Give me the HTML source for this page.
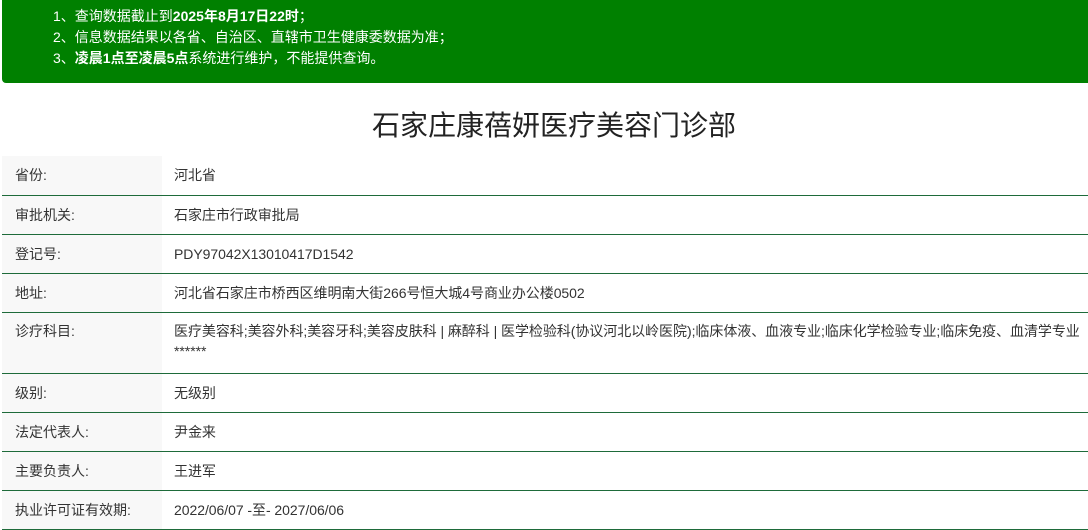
<!DOCTYPE html>
<html><head><meta charset="utf-8"><style>
*{margin:0;padding:0;box-sizing:border-box}
body{width:1088px;height:530px;overflow:hidden;background:#fff;font-family:"Liberation Sans","Noto Sans CJK SC",sans-serif;color:#333}
.ban{position:absolute;left:2px;top:0;width:1086px;height:83px;background:#008000;border-radius:0 0 0 4px;color:#fff;font-size:14px;padding:6px 0 0 51px;line-height:21px}
.ban b{font-weight:bold}
h1{position:absolute;top:107px;left:20px;width:1068px;text-align:center;font-size:28px;font-weight:normal;color:#222;line-height:38px}
table{position:absolute;left:2px;top:156px;width:1086px;border-collapse:collapse;font-size:14px}
td{border-bottom:1px solid #1e6b3a;height:39px;vertical-align:middle;line-height:20px;padding:0}
td.l{width:160px;background:#f8f8f8;padding-left:13px}
td.v{padding-left:12px;letter-spacing:-0.05px}
tr.big td{height:61px;vertical-align:top;padding-top:8px}
</style></head><body>
<div class="ban">
<div>1、查询数据截止到<b>2025年8月17日22时</b>；</div>
<div>2、信息数据结果以各省、自治区、直辖市卫生健康委数据为准；</div>
<div>3、<b>凌晨1点至凌晨5点</b>系统进行维护，不能提供查询。</div>
</div>
<h1>石家庄康蓓妍医疗美容门诊部</h1>
<table>
<tr><td class="l">省份:</td><td class="v">河北省</td></tr>
<tr><td class="l">审批机关:</td><td class="v">石家庄市行政审批局</td></tr>
<tr><td class="l">登记号:</td><td class="v">PDY97042X13010417D1542</td></tr>
<tr><td class="l">地址:</td><td class="v">河北省石家庄市桥西区维明南大街266号恒大城4号商业办公楼0502</td></tr>
<tr class="big"><td class="l">诊疗科目:</td><td class="v">医疗美容科;美容外科;美容牙科;美容皮肤科 | 麻醉科 | 医学检验科(协议河北以岭医院);临床体液、血液专业;临床化学检验专业;临床免疫、血清学专业<br>******</td></tr>
<tr><td class="l">级别:</td><td class="v">无级别</td></tr>
<tr><td class="l">法定代表人:</td><td class="v">尹金来</td></tr>
<tr><td class="l">主要负责人:</td><td class="v">王进军</td></tr>
<tr><td class="l">执业许可证有效期:</td><td class="v">2022/06/07 -至- 2027/06/06</td></tr>
</table>
</body></html>
